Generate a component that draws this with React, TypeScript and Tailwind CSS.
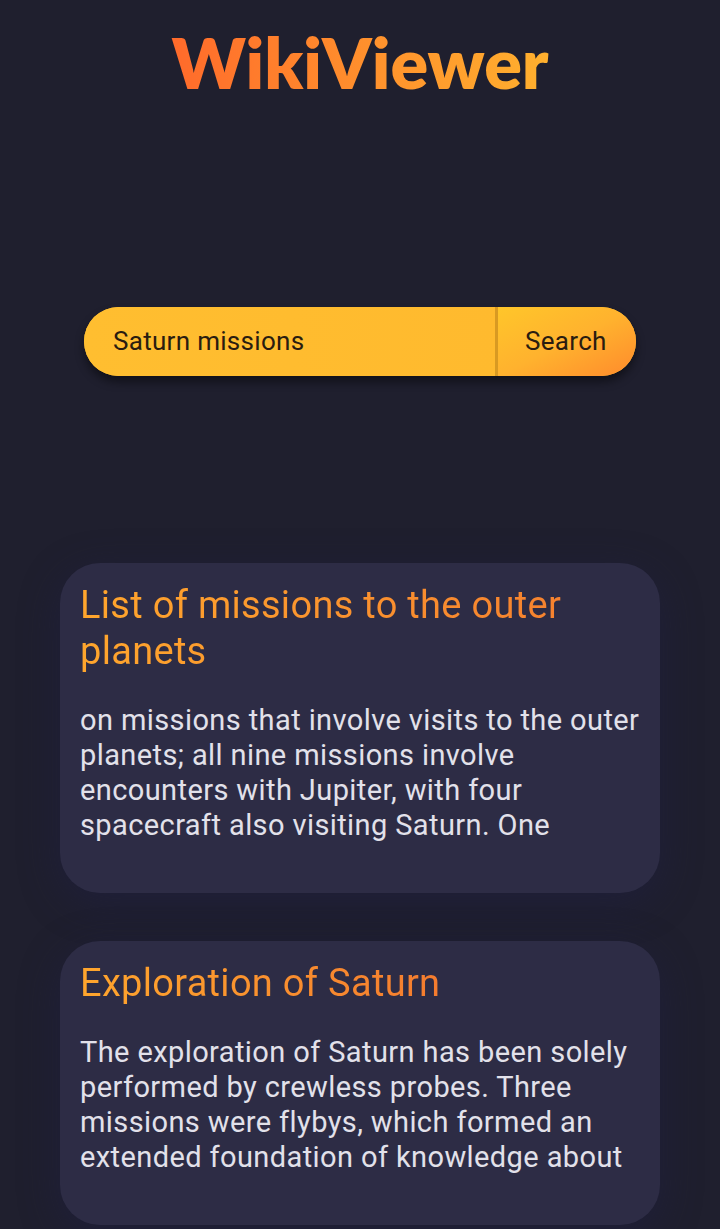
import React from "react";

const results = [
  {
    title: "List of missions to the outer planets",
    body: "on missions that involve visits to the outer planets; all nine missions involve encounters with Jupiter, with four spacecraft also visiting Saturn. One",
  },
  {
    title: "Exploration of Saturn",
    body: "The exploration of Saturn has been solely performed by crewless probes. Three missions were flybys, which formed an extended foundation of knowledge about",
  },
];

export default function App() {
  return (
    <div
      className="min-h-[1229px] w-full bg-[#1f1f2e] overflow-hidden"
      style={{ fontFamily: "Roboto, 'Noto Sans', sans-serif" }}
    >
      <h1
        className="pt-[18px] text-center text-[70px] leading-[88px] font-extrabold bg-gradient-to-r from-[#ff6a2b] to-[#ffb02e] bg-clip-text text-transparent w-fit mx-auto"
        style={{ fontFamily: "Lato, 'Open Sans', sans-serif" }}
      >
        WikiViewer
      </h1>

      <div className="mt-[201px] mx-[84px] h-[69px] flex rounded-full bg-[#ffbc2f] shadow-[0_6px_10px_rgba(0,0,0,0.45)] overflow-hidden">
        <div className="flex-1 flex items-center pl-[29px] text-[26px] tracking-[0.3px] text-[#2a1c10] bg-gradient-to-r from-[#ffbe30] to-[#ffba2e] border-r-[3px] border-[#d99a22]">
          Saturn missions
        </div>
        <div className="w-[138px] flex items-center pl-[27px] text-[26px] tracking-[0.3px] text-[#2a1c10] bg-gradient-to-br from-[#ffc62a] via-[#ffb22e] to-[#ff8a2c]">
          Search
        </div>
      </div>

      <div className="mt-[187px] mx-[60px] flex flex-col gap-[48px]">
        {results.map((r) => (
          <div
            key={r.title}
            className="rounded-[40px] bg-[#2d2c45] pt-[19px] pb-[50px] px-[20px] shadow-[0_10px_40px_rgba(30,30,70,0.45)]"
          >
            <h2 className="text-[38px] leading-[46px] tracking-[0.3px] bg-gradient-to-r from-[#ffa62d] to-[#f47c2f] bg-clip-text text-transparent w-fit">
              {r.title}
            </h2>
            <p className="mt-[29px] text-[29px] leading-[35px] tracking-[0.4px] text-[#e2e1ea]">
              {r.body}
            </p>
          </div>
        ))}
      </div>
    </div>
  );
}
